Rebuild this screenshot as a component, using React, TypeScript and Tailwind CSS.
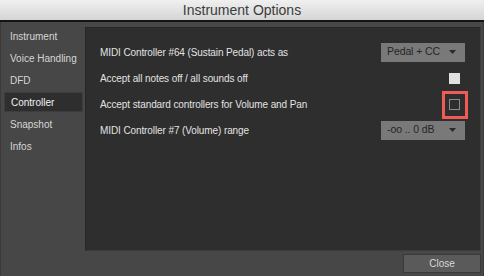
import React from "react";

const font = { fontFamily: '"Liberation Sans", Arial, sans-serif' };

function Arrow() {
  return (
    <svg width="7" height="4" viewBox="0 0 7 4" className="block">
      <polygon points="0,0 7,0 3.5,4" fill="#2a2a2a" />
    </svg>
  );
}

function Dropdown({ label }: { label: string }) {
  return (
    <div className="flex h-[19px] w-[84px] items-center justify-between bg-[#797979] pl-[6px] pr-[9px] text-[10.5px] text-[#262626]">
      <span>{label}</span>
      <Arrow />
    </div>
  );
}

export default function App() {
  const items = ["Instrument", "Voice Handling", "DFD", "Controller", "Snapshot", "Infos"];
  return (
    <div className="flex h-[276px] w-[484px] flex-col overflow-hidden bg-[#474747]" style={font}>
      <div className="flex h-[20px] items-center justify-center bg-gradient-to-b from-[#f0f0f0] to-[#d5d5d5] text-[14px] text-[#3c3c3c]">
        Instrument Options
      </div>
      <div className="h-[2px] bg-[#141414]" />
      <div className="flex flex-1 flex-col border-x border-[#3a3a3a]">
        <div className="flex h-[229px] pr-[2px]">
          <div className="w-[84px] pt-[3px]">
            {items.map((it) => (
              <div key={it} className="flex h-[22px] items-center">
                {it === "Controller" ? (
                  <div className="ml-[3px] flex h-[20px] w-[79px] items-center border border-[#3d3d3d] bg-[#2e2e2e] pl-[6px] text-[10px] text-[#f2f2f2]">
                    {it}
                  </div>
                ) : (
                  <div className="pl-[9px] text-[10px] text-[#d6d6d6]">{it}</div>
                )}
              </div>
            ))}
          </div>
          <div className="mt-[5px] flex-1 border border-[#3c3c3c] border-t-[#262626] border-l-[#262626] bg-[#2e2e2e] pl-[14px] pr-[15px] pt-[11px] text-[10px] tracking-[-0.1px] text-[#e2e2e2]">
            <div className="flex h-[26px] items-center justify-between">
              <span>MIDI Controller #64 (Sustain Pedal) acts as</span>
              <Dropdown label="Pedal + CC" />
            </div>
            <div className="flex h-[26px] items-center justify-between">
              <span>Accept all notes off / all sounds off</span>
              <div className="flex w-[84px] justify-end pr-[5px]">
                <div className="h-[11px] w-[11px] bg-[#e0e0e0]" />
              </div>
            </div>
            <div className="flex h-[26px] items-center justify-between">
              <span>Accept standard controllers for Volume and Pan</span>
              <div className="flex w-[84px] justify-end pr-[5px]">
                <div className="relative h-[11px] w-[11px] border border-[#8a8a8a] bg-[#2e2e2e]">
                  <div className="absolute -left-[8px] -top-[9px] h-[28px] w-[26px] border-[3px] border-[#f25a55]" />
                </div>
              </div>
            </div>
            <div className="flex h-[26px] items-center justify-between">
              <span>MIDI Controller #7 (Volume) range</span>
              <Dropdown label="-oo .. 0 dB" />
            </div>
          </div>
        </div>
        <div className="flex flex-1 items-start justify-end pr-[2px] pt-[3px]">
          <div className="flex h-[19px] w-[78px] items-center justify-center border border-[#393939] bg-[#5a5a5a] text-[10px] text-[#d8d8d8]">
            Close
          </div>
        </div>
      </div>
    </div>
  );
}
